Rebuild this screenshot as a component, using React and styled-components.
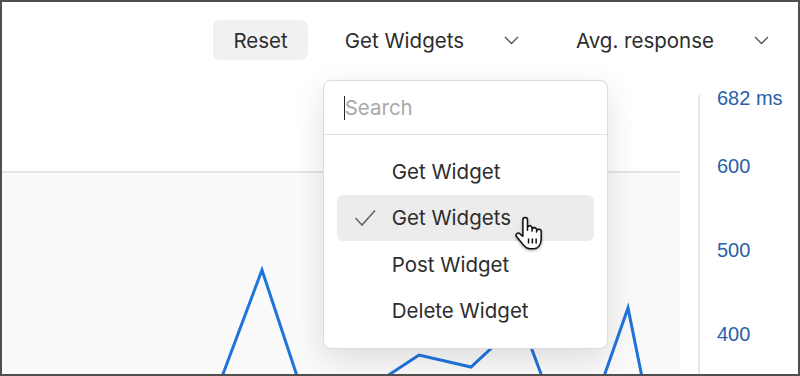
import React from "react";
import styled, { createGlobalStyle } from "styled-components";

const Global = createGlobalStyle`
  html, body { margin: 0; padding: 0; background: #fff; }
  body { font-family: Inter, "Noto Sans", sans-serif; color: #2d2d2d; }
  * { box-sizing: border-box; }
`;

const ITEMS = ["Get Widget", "Get Widgets", "Post Widget", "Delete Widget"];
const TICKS = [
  { label: "682 ms", gap: 0 },
  { label: "600", gap: 44 },
  { label: "500", gap: 60 },
  { label: "400", gap: 60 },
];

function Chevron() {
  return (
    <svg width="15" height="9" viewBox="0 0 15 9" fill="none">
      <polyline points="1,1 7.5,7.5 14,1" stroke="#555" strokeWidth="1.4" />
    </svg>
  );
}

function Check() {
  return (
    <svg width="22" height="18" viewBox="0 0 22 18" fill="none">
      <polyline points="1.5,9 8,16 21,1.5" stroke="#666" strokeWidth="1.6" />
    </svg>
  );
}

function Hand() {
  return (
    <svg width="32" height="36.5" viewBox="0 0 21 24" fill="none">
      <path
        d="M6.5 14 V3.2 a1.5 1.5 0 0 1 3 0 V10 V8.6 a1.5 1.5 0 0 1 3 0 V10.6 V9.8 a1.5 1.5 0 0 1 3 0 V11.2 V10.8 a1.5 1.5 0 0 1 3 0 V16 c0 3.6 -2 6.2 -5 6.2 H11.2 c-2 0 -3.1 -0.8 -4.1 -2.2 L2.4 14.3 a1.4 1.4 0 0 1 2.1 -1.9 Z"
        fill="#fff"
        stroke="#111"
        strokeWidth="1"
        strokeLinejoin="round"
      />
      <path d="M10.2 15.4v3.4M12.7 15.4v3.4M15.2 15.4v3.4" stroke="#111" strokeWidth="1" />
    </svg>
  );
}

export default function App() {
  return (
    <Frame>
      <Global />
      <Toolbar>
        <ResetButton>Reset</ResetButton>
        <TriggerWrap>
          <Trigger>
            Get Widgets
            <Chevron />
          </Trigger>
          <Menu>
            <SearchBox>
              <Caret />
              <SearchInput placeholder="Search" readOnly />
            </SearchBox>
            <List>
              {ITEMS.map((item) => (
                <Item key={item} $active={item === "Get Widgets"}>
                  {item === "Get Widgets" && (
                    <CheckSlot>
                      <Check />
                    </CheckSlot>
                  )}
                  {item}
                  {item === "Get Widgets" && (
                    <Cursor>
                      <Hand />
                    </Cursor>
                  )}
                </Item>
              ))}
            </List>
          </Menu>
        </TriggerWrap>
        <Trigger>
          Avg. response
          <Chevron />
        </Trigger>
      </Toolbar>
      <Body>
        <Plot>
          <Band />
          <Fill />
          <Lines viewBox="2 60 678 314" width="678" height="314">
            <g stroke="#1f74dc" strokeWidth="3" fill="none" strokeLinejoin="miter">
              <polyline points="220,382 262,270 299,382" />
              <polyline points="378,382 419,355 471,367 500,340 515,318 531,347 544,382" />
              <polyline points="602,382 628,308 643,382" />
            </g>
          </Lines>
        </Plot>
        <AxisLine />
        <Labels>
          {TICKS.map((t) => (
            <Tick key={t.label} $gap={t.gap}>
              {t.label}
            </Tick>
          ))}
        </Labels>
      </Body>
    </Frame>
  );
}

const Frame = styled.div`
  width: 800px;
  height: 376px;
  border: 2px solid #4f4f4f;
  background: #fff;
  overflow: hidden;
  display: flex;
  flex-direction: column;
`;

const Toolbar = styled.div`
  display: flex;
  justify-content: flex-end;
  align-items: center;
  gap: 17px;
  padding: 18px 9px 0 0;
  height: 58px;
  font-size: 20.5px;
`;

const ResetButton = styled.button`
  height: 40px;
  padding: 0 20px;
  border: none;
  border-radius: 6px;
  background: #f1f1f1;
  font: inherit;
  color: #2d2d2d;
`;

const TriggerWrap = styled.div`
  position: relative;
`;

const Trigger = styled.div`
  height: 40px;
  padding: 0 20px;
  display: flex;
  align-items: center;
  gap: 40px;
  color: #2d2d2d;
`;

const Menu = styled.div`
  position: absolute;
  top: calc(100% + 20px);
  left: -2px;
  width: 285px;
  background: #fff;
  border: 1px solid #dcdcdc;
  border-radius: 8px;
  box-shadow: 0 10px 32px rgba(0, 0, 0, 0.12);
  z-index: 5;
`;

const SearchBox = styled.div`
  position: relative;
  height: 54px;
  display: flex;
  align-items: center;
  padding-left: 21px;
  border-bottom: 1px solid #e2e2e2;
`;

const Caret = styled.span`
  position: absolute;
  left: 20px;
  top: 15px;
  width: 1.5px;
  height: 24px;
  background: #222;
`;

const SearchInput = styled.input`
  border: none;
  outline: none;
  background: transparent;
  padding: 0;
  width: 100%;
  font: inherit;
  font-size: 20.5px;
  color: #2d2d2d;
  &::placeholder {
    color: #a9a9a9;
  }
`;

const List = styled.div`
  padding: 13px 13px 14px;
  display: flex;
  flex-direction: column;
`;

const Item = styled.div`
  position: relative;
  height: 46.5px;
  display: flex;
  align-items: center;
  padding-left: 55px;
  border-radius: 6px;
  font-size: 20.5px;
  color: #2d2d2d;
  background: ${(p) => (p.$active ? "#ececec" : "transparent")};
`;

const CheckSlot = styled.span`
  position: absolute;
  left: 17px;
  top: 14px;
  display: flex;
`;

const Cursor = styled.span`
  position: absolute;
  left: 176px;
  top: 20px;
  display: flex;
  filter: drop-shadow(0 1px 1.5px rgba(0, 0, 0, 0.35));
`;

const Body = styled.div`
  flex: 1;
  display: flex;
  min-height: 0;
`;

const Plot = styled.div`
  position: relative;
  width: 678px;
  display: flex;
  flex-direction: column;
`;

const Band = styled.div`
  height: 111px;
  background: #fff;
`;

const Fill = styled.div`
  flex: 1;
  background: #fafafa;
  border-top: 2px solid #e4e4e4;
`;

const Lines = styled.svg`
  position: absolute;
  inset: 0;
  display: block;
`;

const AxisLine = styled.div`
  width: 2px;
  margin: 35px 0 0 18px;
  background: #e6e6e6;
`;

const Labels = styled.div`
  display: flex;
  flex-direction: column;
  padding: 26px 0 0 17px;
  font-family: "Liberation Sans", Arial, sans-serif;
  font-size: 20px;
  line-height: 24px;
  color: #2b5ea8;
`;

const Tick = styled.div`
  margin-top: ${(p) => p.$gap}px;
  white-space: nowrap;
`;
